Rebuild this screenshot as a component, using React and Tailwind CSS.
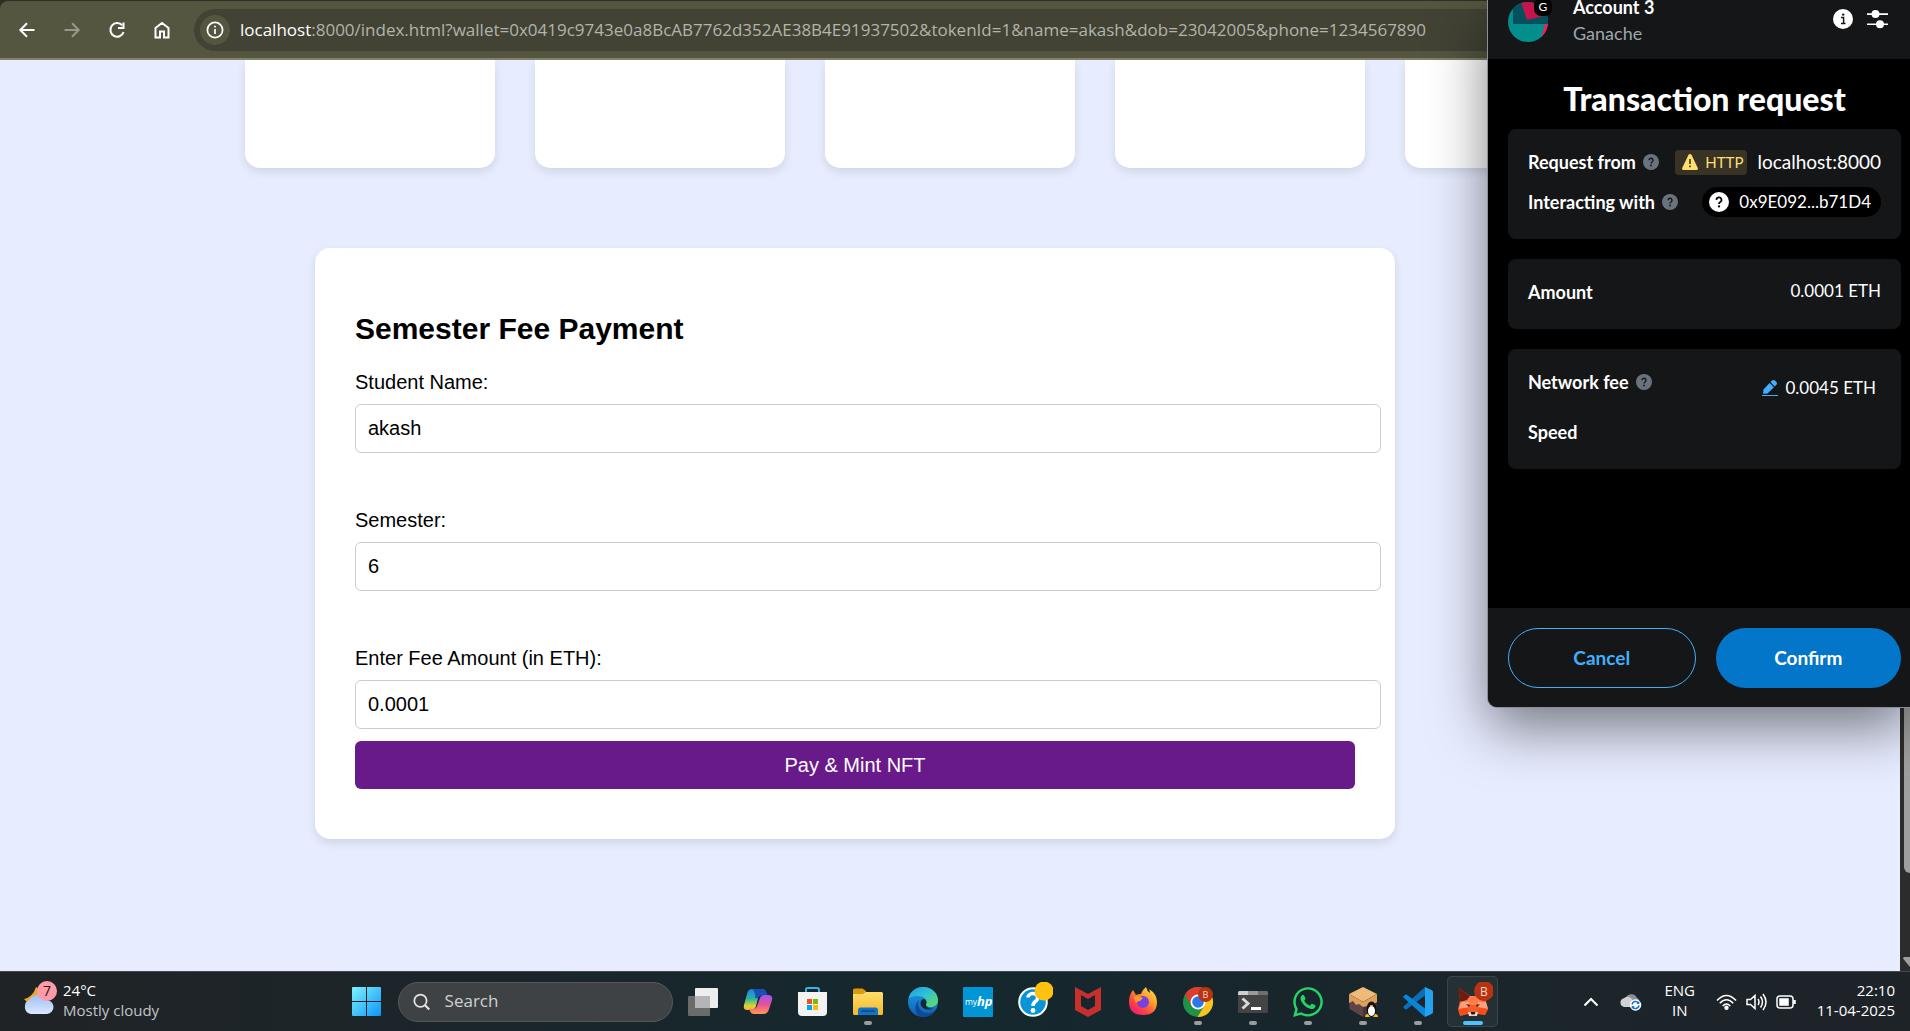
import React from "react";
import { FaWhatsapp } from "react-icons/fa";

const URL_REST =
  ":8000/index.html?wallet=0x0419c9743e0a8BcAB7762d352AE38B4E91937502&tokenId=1&name=akash&dob=23042005&phone=1234567890";

/* ---------- Browser toolbar ---------- */

function NavButton({ label, muted, children }) {
  return (
    <button
      type="button"
      aria-label={label}
      className={`flex h-10 w-[45px] items-center justify-center ${muted ? "text-[#98998a]" : "text-white"}`}
    >
      <svg width="20" height="20" viewBox="0 0 20 20" fill="none" stroke="currentColor" strokeWidth="2">
        {children}
      </svg>
    </button>
  );
}

function BrowserBar() {
  return (
    <header className="bg-[#2f3025] pt-px">
      <div className="flex h-[59px] items-center rounded-tl-lg border-b-2 border-[#81826d] bg-[#54563f] pl-1">
        <NavButton label="Back">
          <path d="M17.5 10H4M10 3.3L3.3 10l6.7 6.7" />
        </NavButton>
        <NavButton label="Forward" muted>
          <path d="M2.500 10H16M10 3.300L16.700 10 10 16.700" />
        </NavButton>
        <NavButton label="Reload">
          <path d="M16.600 12.200A6.800 6.800 0 1 1 15.200 5.300" />
          <path d="M16.500 2.500V8H11" />
        </NavButton>
        <NavButton label="Home">
          <path d="M3.500 17.500V8L10 3l6.500 5v9.500H12v-6H8v6z" />
        </NavButton>
        <div className="ml-[10px] flex h-[42px] flex-1 items-center gap-[10px] rounded-l-full bg-[#424335] pl-[6px]">
          <button
            type="button"
            aria-label="Site information"
            className="flex size-[30px] shrink-0 items-center justify-center rounded-full bg-[#54563f] text-white"
          >
            <svg width="18" height="18" viewBox="0 0 18 18" fill="none" stroke="currentColor" strokeWidth="1.700">
              <circle cx="9" cy="9" r="7.600" />
              <path d="M9 8v5M9 4.800v1.800" />
            </svg>
          </button>
          <div className="whitespace-nowrap font-['Open_Sans',sans-serif] text-[17px] text-[#b3b4aa]">
            <span className="text-white">localhost</span>
            {URL_REST}
          </div>
        </div>
      </div>
    </header>
  );
}

/* ---------- Page ---------- */

function Field({ id, label, value }) {
  return (
    <div className="flex flex-col gap-[10px]">
      <label htmlFor={id} className="leading-6">
        {label}
      </label>
      <input
        id={id}
        defaultValue={value}
        className="-mr-[26px] h-[49px] rounded-[6px] border border-[#cccccc] bg-white px-3 outline-none"
      />
    </div>
  );
}

function Page() {
  return (
    <main className="flex min-h-0 flex-1 bg-[#e7ecff]">
      <div className="min-w-0 flex-1 overflow-hidden font-['Liberation_Sans',Arial,sans-serif] text-[20px] text-black">
        <div className="flex justify-center gap-10">
          {[0, 1, 2, 3, 4].map((n) => (
            <div
              key={n}
              className="h-[108px] w-[250px] shrink-0 rounded-b-[15px] bg-white shadow-[0_4px_10px_rgba(0,0,0,0.1)]"
            />
          ))}
        </div>
        <div className="mt-20 flex justify-center pr-[190px]">
          <form className="w-[1080px] rounded-[15px] bg-white px-10 pt-16 pb-[50px] shadow-[0_4px_10px_rgba(0,0,0,0.1)]">
            <h2 className="mb-6 text-[30px] leading-[34px] font-bold">Semester Fee Payment</h2>
            <div className="flex flex-col gap-[55px]">
              <Field id="student" label="Student Name:" value="akash" />
              <Field id="semester" label="Semester:" value="6" />
              <Field id="fee" label="Enter Fee Amount (in ETH):" value="0.0001" />
            </div>
            <button type="button" className="mt-3 h-12 w-full rounded-[6px] bg-[#681a8a] text-white">
              Pay &amp; Mint NFT
            </button>
          </form>
        </div>
      </div>
      <div className="flex w-[10px] flex-col items-end justify-between overflow-hidden bg-[#2c2c2c]">
        <div className="h-[813px] w-[6px] rounded-bl-md bg-[#9f9f9f]" />
        <svg width="7" height="14" viewBox="0 0 7 14" className="shrink-0">
          <path d="M0 1.500Q0 0 1.500 0H7v10z" fill="#9f9f9f" />
        </svg>
      </div>
    </main>
  );
}

/* ---------- Wallet popup ---------- */

function HelpDot({ size = 16, bg = "#6a737d", fg = "#141618" }) {
  return (
    <svg width={size} height={size} viewBox="0 0 16 16" className="shrink-0">
      <circle cx="8" cy="8" r="8" fill={bg} />
      <path
        d="M6 6.300a2 2 0 1 1 3 1.700c-.7.400-1 .8-1 1.500"
        fill="none"
        stroke={fg}
        strokeWidth="1.400"
      />
      <circle cx="8" cy="11.500" r=".9" fill={fg} />
    </svg>
  );
}

function Panel({ className, children }) {
  return <section className={`rounded-lg bg-[#141618] px-5 ${className}`}>{children}</section>;
}

function WalletPopup() {
  return (
    <aside className="absolute top-0 right-0 w-[422px] rounded-bl-[9px] bg-black font-['Lato',sans-serif] text-[18px] text-white shadow-[0_0_0_1px_#8c8f9a,0_20px_56px_rgba(0,0,0,0.5)]">
      <div className="flex h-[59px] items-start bg-[#141618] pr-[21px] pl-5">
        <div className="relative mt-[2px] size-10">
          <svg width="40" height="40" viewBox="0 0 40 40">
            <clipPath id="avatar">
              <circle cx="20" cy="20" r="20" />
            </clipPath>
            <g clipPath="url(#avatar)">
              <rect width="40" height="40" fill="#038e8e" />
              <path d="M32 40l5-18h3v18z" fill="#fc1960" />
              <path d="M5 0h35v22H5z" fill="#05505e" />
              <path d="M13 0h27v13L19 18z" fill="#c8144c" />
            </g>
          </svg>
          <span className="absolute -top-[4px] left-[26px] flex size-[18px] items-center justify-center rounded-[7px] bg-black text-[12px] leading-none">
            G
          </span>
        </div>
        <div className="-mt-[6px] ml-[25px] flex-1 leading-[26px]">
          <div className="font-bold">Account 3</div>
          <div className="text-[#9fa6ae]">Ganache</div>
        </div>
        <div className="mt-[9px] flex gap-[14px]">
          <button type="button" aria-label="Account details">
            <svg width="20" height="20" viewBox="0 0 20 20">
              <circle cx="10" cy="10" r="10" fill="#fff" />
              <path d="M8 8.500h2.600V14M8 14.500h4.500" fill="none" stroke="#141618" strokeWidth="1.500" />
              <circle cx="10.200" cy="5.600" r="1.200" fill="#141618" />
            </svg>
          </button>
          <button type="button" aria-label="Settings">
            <svg width="22" height="20" viewBox="0 0 22 20" fill="#fff">
              <path d="M0 4.300h21v1.600H0zM0 14.400h21V16H0z" />
              <circle cx="8.500" cy="5" r="4" />
              <circle cx="13" cy="15.200" r="4" />
            </svg>
          </button>
        </div>
      </div>

      <div className="flex min-h-[549px] flex-col gap-5 pr-[9px] pl-5">
        <h1 className="-mb-5 pt-[22px] pb-3 text-center text-[32px] leading-9 font-black">Transaction request</h1>
        <Panel className="pt-[13px] pb-[17px]">
          <div className="flex h-10 items-center">
            <span className="font-bold">Request from</span>
            <span className="ml-[7px]"><HelpDot /></span>
            <span className="ml-auto flex h-[25px] items-center gap-[7px] rounded-[4px] bg-[#393325] pr-1 pl-[7px] text-[15px] text-[#ffdf70]">
              <svg width="16" height="16" viewBox="0 0 16 16">
                <path d="M8 0Q9 0 9.600 1L15.800 14q.5 2-1.300 2h-13Q-.3 16 .2 14L6.400 1Q7 0 8 0z" fill="#ffdf70" />
                <path d="M8 5v5M8 11.500v1.800" stroke="#393325" strokeWidth="1.600" />
              </svg>
              HTTP
            </span>
            <span className="ml-[10px] text-[19px]">localhost:8000</span>
          </div>
          <div className="flex h-10 items-center">
            <span className="font-bold">Interacting with</span>
            <span className="ml-[7px]"><HelpDot /></span>
            <button type="button" className="ml-auto flex h-[30px] items-center gap-[10px] rounded-full bg-black pr-[10px] pl-[7px] text-[17px]">
              <HelpDot size={20} bg="#fff" fg="#000" />
              0x9E092...b71D4
            </button>
          </div>
        </Panel>
        <Panel className="flex h-[70px] items-center justify-between pb-[3px]">
          <span className="font-bold">Amount</span>
          <span className="pb-[3px] text-[17px]">0.0001 ETH</span>
        </Panel>
        <Panel className="pt-2 pb-3">
          <div className="flex h-[50px] items-center">
            <span className="font-bold">Network fee</span>
            <span className="ml-[7px]"><HelpDot /></span>
            <span className="ml-auto flex items-center gap-[7px] pt-3 pr-[5px] text-[17px]">
              <button type="button" aria-label="Edit network fee">
                <svg width="16" height="16" viewBox="0 0 16 16" fill="#43aefc">
                  <path d="M0 15h16v1H0zM1 13.800l.5-4.300L7.600 3l4.300 4.300-6.400 6.200zM8.500 2l1.300-1.300q1.700-1.300 3.400 0l1 1q1.600 1.700 0 3.400l-1.400 1.300z" />
                </svg>
              </button>
              0.0045 ETH
            </span>
          </div>
          <div className="flex h-[50px] items-center font-bold">Speed</div>
        </Panel>
      </div>

      <div className="flex gap-5 rounded-bl-[9px] bg-[#141618] pt-5 pr-[9px] pb-[19px] pl-5 text-[19px] font-bold">
        <button type="button" className="h-[60px] flex-1 rounded-full border border-[#43aefc] text-[#43aefc]">
          Cancel
        </button>
        <button type="button" className="h-[60px] flex-1 rounded-full bg-[#0376c9]">
          Confirm
        </button>
      </div>
    </aside>
  );
}

/* ---------- Taskbar ---------- */

function Slot({ label, open, active, children }) {
  return (
    <button type="button" aria-label={label} className="relative flex h-[59px] w-[55px] shrink-0 items-center justify-center">
      {active && <span className="absolute inset-x-[2px] inset-y-1 rounded-[5px] border border-white/10 bg-white/5" />}
      <svg width="40" height="40" viewBox="0 0 40 40" className="relative">
        {children}
      </svg>
      {open && (
        <span className={`absolute bottom-[6px] h-1 rounded-full ${active ? "w-5 bg-[#4cc2ff]" : "w-2 bg-[#9a9c9e]"}`} />
      )}
    </button>
  );
}

function Gradients() {
  return (
    <svg width="0" height="0" className="absolute" aria-hidden="true">
      <defs>
        <linearGradient id="win" x1="0" y1="0" x2="1" y2="1">
          <stop offset="0" stopColor="#7df3ff" />
          <stop offset="1" stopColor="#0f94f5" />
        </linearGradient>
        <linearGradient id="coA" x1="0" y1="0" x2="0" y2="1">
          <stop offset="0" stopColor="#1f7fe8" />
          <stop offset=".45" stopColor="#26b3a5" />
          <stop offset=".8" stopColor="#d9d62d" />
          <stop offset="1" stopColor="#f4b52b" />
        </linearGradient>
        <linearGradient id="coB" x1="0" y1="0" x2="0" y2="1">
          <stop offset="0" stopColor="#9a55f5" />
          <stop offset=".5" stopColor="#e8509c" />
          <stop offset="1" stopColor="#ff9a4d" />
        </linearGradient>
        <linearGradient id="folder" x1="0" y1="0" x2="0" y2="1">
          <stop offset="0" stopColor="#ffdc6b" />
          <stop offset="1" stopColor="#f5b92a" />
        </linearGradient>
        <linearGradient id="edgeTop" x1="0" y1="0" x2="1" y2="1">
          <stop offset="0" stopColor="#1a9be0" />
          <stop offset=".5" stopColor="#34c4d2" />
          <stop offset="1" stopColor="#6be04a" />
        </linearGradient>
        <linearGradient id="edgeLow" x1="0" y1="0" x2="0" y2="1">
          <stop offset="0" stopColor="#1f9ee8" />
          <stop offset="1" stopColor="#0c5fb8" />
        </linearGradient>
        <linearGradient id="fox" x1="1" y1="0" x2=".2" y2="1">
          <stop offset="0" stopColor="#fff14d" />
          <stop offset=".4" stopColor="#ffa02b" />
          <stop offset=".7" stopColor="#ff4a3d" />
          <stop offset="1" stopColor="#f0167e" />
        </linearGradient>
        <linearGradient id="cloud" x1="0" y1="0" x2="0" y2="1">
          <stop offset="0" stopColor="#9cc0f5" />
          <stop offset="1" stopColor="#dbe8ff" />
        </linearGradient>
      </defs>
    </svg>
  );
}

function AppIcons() {
  return (
    <div className="ml-[2px] flex">
      <Slot label="Task view">
        <rect x="5" y="14" width="22" height="20" rx="1" fill="#6b6b6b" />
        <rect x="12" y="6" width="23" height="20" rx="1" fill="#eeeeee" />
        <path d="M12 14h15v12H13q-1 0-1-1z" fill="#b5b5b5" />
      </Slot>
      <Slot label="Copilot">
        <path d="M14 7h10q3 0 4 3l1 3h-5q-3 0-4 3l-2 8q-1 4-5 4H9q-4 0-3-5l3-11q1-5 5-5z" fill="url(#coA)" />
        <path d="M14 7h10q3 0 4 3l1 3h-5q-3 0-4 3h-3q1-6-3-9z" fill="#1550b8" />
        <path d="M26 13h4q5 0 4 5l-3 9q-1 5-6 5H16q-3 0-4-3l-1-2h4q3 0 4-3l3-8q1-3 4-3z" fill="url(#coB)" />
      </Slot>
      <Slot label="Microsoft Store">
        <path d="M13 11V7.500Q13 6 14.500 6h10Q26 6 26 7.500V11" fill="none" stroke="#2fb5ea" strokeWidth="2" />
        <path d="M5 10h29v20q0 4-4 4H9q-4 0-4-4z" fill="#f3f3f3" />
        <path d="M14 17h5v5h-5z" fill="#f25022" />
        <path d="M20 17h5v5h-5z" fill="#7fba00" />
        <path d="M14 23h5v5h-5z" fill="#00a4ef" />
        <path d="M20 23h5v5h-5z" fill="#ffb900" />
      </Slot>
      <Slot label="File Explorer" open>
        <path d="M5 8q0-1.500 1.500-1.500h8L18 9v5H5z" fill="#d99a0b" />
        <path d="M5 12h10l3-2h15.500Q35 10 35 11.500v20Q35 33 33.500 33h-27Q5 33 5 31.500z" fill="url(#folder)" />
        <path d="M10 33v-5q0-2.500 2.500-2.500h15Q30 25.500 30 28v5z" fill="#1272c4" />
        <path d="M13.500 29h13" stroke="#0a4a8a" strokeWidth="1.500" />
      </Slot>
      <Slot label="Edge">
        <circle cx="20" cy="20" r="15" fill="url(#edgeLow)" />
        <path d="M5.500 16.500C7 9.500 13 5 20 5c8.500 0 15 6 15 13 0 4.500-3.500 7-7.500 7-3.500 0-5.500-1.500-4.500-3 1.500-2 0-6.500-5-7.500-5-1-10 0-12.500 2z" fill="url(#edgeTop)" />
        <path d="M16 18c-3 7 3 14 10 13 3-.5 5.500-2 6.500-3.500C29 34 23 35.500 19 35c-7-1-9-11-3-17z" fill="#0f4a96" />
        <path d="M23 22c1-1.500.5-4-1.500-5-3 0-4 2-4 4 0 5 6 8.500 14 5.500-4 1-9.500-1.500-8.500-4.500z" fill="#14282e" />
      </Slot>
      <Slot label="myHP">
        <rect x="5" y="5" width="30" height="30" rx="1" fill="#0096d6" />
        <text x="7" y="23" fill="#fff" fontFamily="Open Sans" fontSize="8.500">my</text>
        <text x="19" y="24" fill="#fff" fontFamily="Open Sans" fontSize="13" fontStyle="italic" fontWeight="700">hp</text>
      </Slot>
      <Slot label="HP Support">
        <circle cx="20" cy="20" r="13.800" fill="#0a94d8" stroke="#fff" strokeWidth="2" />
        <path d="M15 15.500a4.800 4.300 0 1 1 7.500 3.800c-2 1.400-2.500 2.200-2.500 4.700" fill="none" stroke="#fff" strokeWidth="3.500" />
        <circle cx="20" cy="28.500" r="2.400" fill="#fff" />
        <circle cx="31" cy="9" r="9.500" fill="#ffc20e" />
      </Slot>
      <Slot label="McAfee">
        <path d="M7 5l13 7 13-7v23l-13 7-13-7zm6 8v11l7 4 7-4V13l-7 4z" fill="#c8302e" fillRule="evenodd" />
      </Slot>
      <Slot label="Firefox">
        <path d="M10 8l3 5q2-1 5-1 1-4 5-7 1 4 4 6 0-2-1-4 8 5 8 13 0 13-14 13T6 20q0-7 4-12z" fill="url(#fox)" />
        <circle cx="20" cy="20" r="6" fill="#7542e0" />
        <path d="M11 15q4-2 9 1l-3 3q-3 0-4 2-2-3-2-6z" fill="#ff9a2b" />
      </Slot>
      <Slot label="Chrome" open>
        <circle cx="20" cy="20" r="15" fill="#1e9247" />
        <path d="M7 12.500A15 15 0 0 1 33 12.500H20z" fill="#e33b2e" />
        <path d="M7 12.500L13.800 24 20 20V12.500z" fill="#e33b2e" />
        <path d="M33 12.500A15 15 0 0 1 19.500 35L26.500 23.500 20 12.500z" fill="#fcc31e" />
        <circle cx="20" cy="20" r="7.500" fill="#fff" />
        <circle cx="20" cy="20" r="5.800" fill="#2a78ea" />
        <circle cx="27.500" cy="12.500" r="7.500" fill="#b8330f" />
        <text x="27.500" y="15.800" textAnchor="middle" fill="#f4d6cc" fontFamily="Open Sans" fontSize="9">B</text>
      </Slot>
      <Slot label="Terminal" open>
        <rect x="5" y="9" width="30" height="22" rx="1.500" fill="#444444" />
        <path d="M5 13v-2.500Q5 9 6.500 9H15v4z" fill="#cfcfcf" />
        <path d="M15 9h10v4H15z" fill="#9a9a9a" />
        <path d="M25 9h8.500q1.500 0 1.500 1.500V13H25z" fill="#6f6f6f" />
        <path d="M9.500 16.500l5.500 5-5.500 5" fill="none" stroke="#d8d8d8" strokeWidth="3" />
        <path d="M18 26.500h10" stroke="#fff" strokeWidth="3" />
      </Slot>
      <Slot label="WhatsApp" open>
        <FaWhatsapp x="3" y="3" size={34} color="#25d366" />
      </Slot>
      <Slot label="Ganache" open>
        <path d="M20 5l14 7-14 8-14-8z" fill="#edbb78" />
        <path d="M6 12l14 8v15L6.500 27z" fill="#5e4448" />
        <path d="M34 12l-14 8v15l13.500-8z" fill="#46343a" />
        <path d="M6 12l14 8 14-8v8l-3 2-3-2-3 4-5 1-4-3-3 1-3-4-4 2z" fill="#dda05c" />
        <ellipse cx="28.500" cy="27" rx="5" ry="7.500" fill="#111" />
        <ellipse cx="28.500" cy="29" rx="3.500" ry="5" fill="#fff" />
        <path d="M22 35q0-3 3-3l2 3zM35 35q0-3-3-3l-2 3zM26.800 23h3.400l-1.700 2z" fill="#fcb814" />
      </Slot>
      <Slot label="Visual Studio Code" open>
        <path d="M8.500 27.500L27 13.500V5L5.500 24.500q-.5.700 0 1.300l1.700 1.500q.6.500 1.300.2z" fill="#0d6db8" />
        <path d="M8.500 12.500L27 26.500V35L5.500 15.500q-.5-.7 0-1.300l1.700-1.500q.6-.5 1.300-.2z" fill="#0a86d8" />
        <path d="M27 5l6.500 3Q35 8.700 35 10v20q0 1.300-1.500 2L27 35z" fill="#24a2f0" />
      </Slot>
      <Slot label="MetaMask" open active>
        <path d="M6 6l11 8h7l10-4-1 10 2 7-3 6-8-1-3 2h-4l-2-2-8 2-2-7 2-8z" fill="#f2602a" />
        <path d="M6 6l11 8-3 5-6 1-2-2 1-4q-3-4-1-8z" fill="#6e1c12" />
        <path d="M7 20l7-2 3-4h7l3 4 6 2-5 5-5-2h-6l-5 2z" fill="#ff7d48" />
        <path d="M8 20h8v5l-10 2zM33 20h-8v5l10 2z" fill="#ffa27c" />
        <path d="M5 27l9-1 2 5-8 2zM35 27l-9-1-2 5 8 2z" fill="#fb4a1c" />
        <path d="M13 22l4 1-1 2zM27 22l-4 1 1 2z" fill="#3b130c" />
        <path d="M15 30h10l-1 4h-8z" fill="#e8d6cc" />
        <path d="M17.500 30h5l-1 2.500h-3z" fill="#2a1511" />
        <circle cx="31" cy="9" r="10" fill="#b8330f" />
        <text x="31" y="13.500" textAnchor="middle" fill="#f4d6cc" fontFamily="Open Sans" fontSize="12">B</text>
      </Slot>
    </div>
  );
}

function Taskbar() {
  return (
    <footer className="flex h-[60px] items-center border-t border-[#45484c] bg-linear-to-r from-[#202326] via-[#14282e] to-[#1e2328] font-['Open_Sans',sans-serif] text-[15px] text-white">
      <Gradients />
      <button type="button" className="flex w-[339px] items-center pb-1 pl-[22px] text-left">
        <svg width="38" height="40" viewBox="0 0 38 40">
          <path d="M2 19q9-2 12-12 8 4 6 12l-8 5q-6 0-10-5z" fill="#f5a623" />
          <path d="M9 34a7.500 7.500 0 0 1-1-14.500A9 9 0 0 1 24 20a7 7 0 0 1 1 14z" fill="url(#cloud)" />
          <circle cx="25" cy="11" r="10" fill="#ff9aa6" />
          <text x="25" y="16" textAnchor="middle" fill="#1a1a1a" fontFamily="Open Sans" fontSize="14">7</text>
        </svg>
        <span className="ml-[3px] leading-5">
          24°C
          <br />
          <span className="text-[#c3c5c7]">Mostly cloudy</span>
        </span>
      </button>
      <Slot label="Start">
        <path d="M5 6q0-1 1-1h13v14H5zM20 5h13q1 0 1 1v13H20zM5 20h14v14H6q-1 0-1-1zM20 20h14v13q0 1-1 1H20z" fill="url(#win)" />
      </Slot>
      <label className="ml-1 flex h-10 w-[275px] items-center gap-[14px] rounded-full border border-[#55585b] bg-[#3f4245] pl-[14px]">
        <svg width="20" height="20" viewBox="0 0 20 20" fill="none" stroke="#e4e4e4" strokeWidth="2">
          <circle cx="8.500" cy="8.500" r="7" />
          <path d="M13.500 13.500l5 5" strokeWidth="2.500" />
        </svg>
        <input
          aria-label="Search"
          placeholder="Search"
          className="w-full bg-transparent pb-px text-[17px] outline-none placeholder:text-[#cfd0d1]"
        />
      </label>
      <AppIcons />
      <div className="ml-auto flex items-center pr-[15px]">
        <button type="button" aria-label="Show hidden icons">
          <svg width="16" height="10" viewBox="0 0 16 10" fill="none" stroke="#fff" strokeWidth="2">
            <path d="M1.500 8.500L8 2l6.500 6.500" />
          </svg>
        </button>
        <button type="button" aria-label="OneDrive" className="ml-[21px]">
          <svg width="22" height="18" viewBox="0 0 22 18">
            <path d="M6 4.500A6 6 0 0 1 17 5q3.500 1 2 7H8z" fill="#8d9092" />
            <path d="M4 14a4.500 4.500 0 0 1 0-8.800Q8 2 12 6l3 8z" fill="#cfd1d2" />
            <circle cx="15.500" cy="12" r="5.800" fill="#fff" />
            <path d="M12 11.500a3.600 3.600 0 0 1 6.500-1.500M19 12.500a3.600 3.600 0 0 1-6.500 1.500" fill="none" stroke="#1177d1" strokeWidth="1.600" />
            <path d="M19.300 8v3h-3zM11.700 16v-3h3z" fill="#1177d1" />
          </svg>
        </button>
        <button type="button" className="ml-[20px] w-[36px] pb-[3px] text-center leading-5">
          ENG IN
        </button>
        <button type="button" aria-label="Network, volume and battery" className="ml-[18px] flex items-center gap-[9px]">
          <svg width="21" height="16" viewBox="0 0 21 16" fill="none" stroke="#fff" strokeWidth="1.600">
            <path d="M1 6.500Q10.500-3.500 20 6.500M3.800 9.300q6.700-7 13.400 0M6.700 12q3.800-4 7.600 0" />
            <circle cx="10.500" cy="13.700" r="1.400" fill="#fff" />
          </svg>
          <svg width="21" height="18" viewBox="0 0 21 18" fill="none" stroke="#fff" strokeWidth="1.500">
            <path d="M1 6.500h3.500L9 2.500v13l-4.500-4H1zM12 6q2 3 0 6M14.500 3.500q4 5.500 0 11M17 1q6 8 0 16" />
          </svg>
          <svg width="21" height="14" viewBox="0 0 21 14" fill="none" stroke="#fff" strokeWidth="1.500">
            <rect x="1" y="1" width="16" height="12" rx="3" />
            <path d="M4 4h8v6H4z" fill="#fff" />
            <path d="M18.500 5v4" strokeWidth="2.500" />
          </svg>
        </button>
        <button type="button" className="ml-[20px] pb-1 text-right leading-5">
          22:10
          <br />
          11-04-2025
        </button>
      </div>
    </footer>
  );
}

export default function App() {
  return (
    <div className="relative flex h-screen flex-col overflow-hidden">
      <BrowserBar />
      <Page />
      <WalletPopup />
      <Taskbar />
    </div>
  );
}
